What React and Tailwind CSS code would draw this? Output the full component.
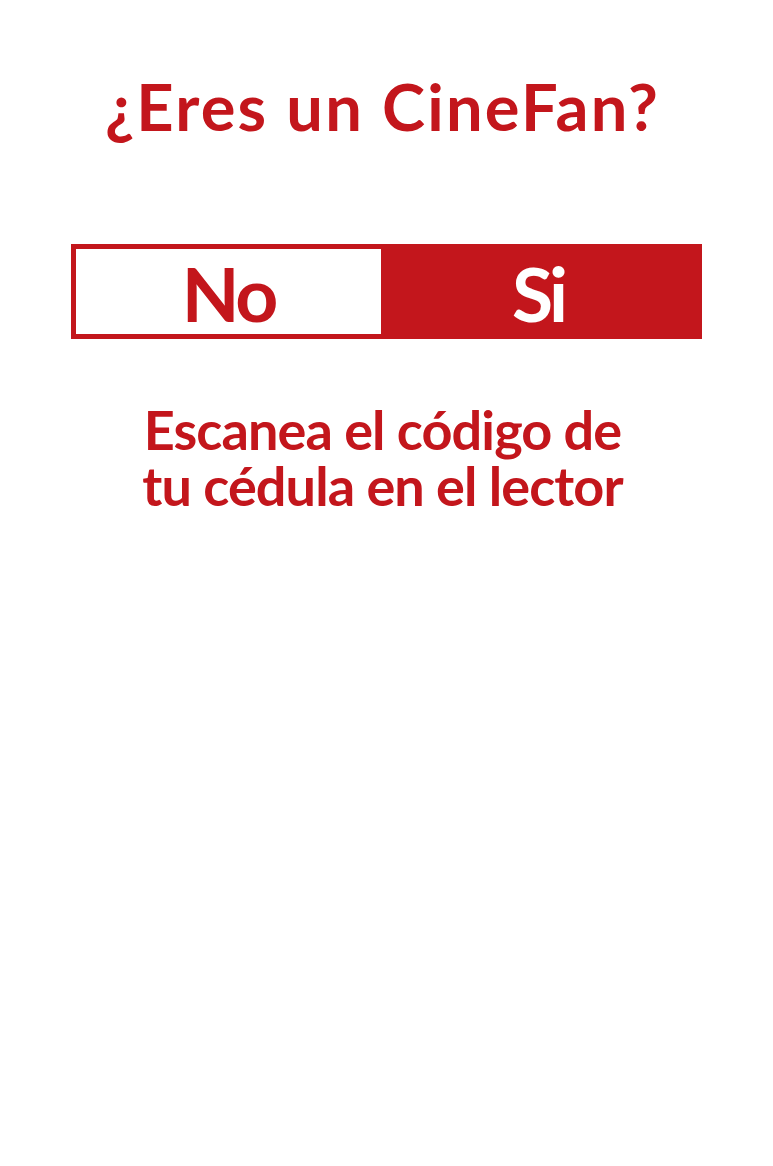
export default function App() {
  return (
    <div
      className="flex min-h-[1166px] w-full flex-col items-center bg-white text-[#c3161c]"
      style={{ fontFamily: 'Lato, "Open Sans", sans-serif' }}
    >
      <h1 className="mt-[74px] pr-[8px] text-[65px] font-bold leading-none tracking-[2.2px]">
        ¿Eres un CineFan?
      </h1>

      {/* toggle */}
      <div className="mt-[105px] flex h-[95px] w-[631px]">
        <button className="flex w-[315px] items-center justify-center border-[5px] border-[#c3161c] bg-white pt-[4px] text-[75px] font-bold leading-none tracking-[-3px] text-[#c3161c]">
          No
        </button>
        <button className="flex flex-1 items-center justify-center bg-[#c3161c] pt-[4px] pr-[12px] text-[75px] font-bold leading-none tracking-[-4px] text-white">
          Si
        </button>
      </div>

      <p className="mt-[63px] pr-[8px] text-center text-[54px] font-bold leading-[56px] tracking-[-0.9px]">
        Escanea el código de
        <br />
        tu cédula en el lector
      </p>
    </div>
  );
}
